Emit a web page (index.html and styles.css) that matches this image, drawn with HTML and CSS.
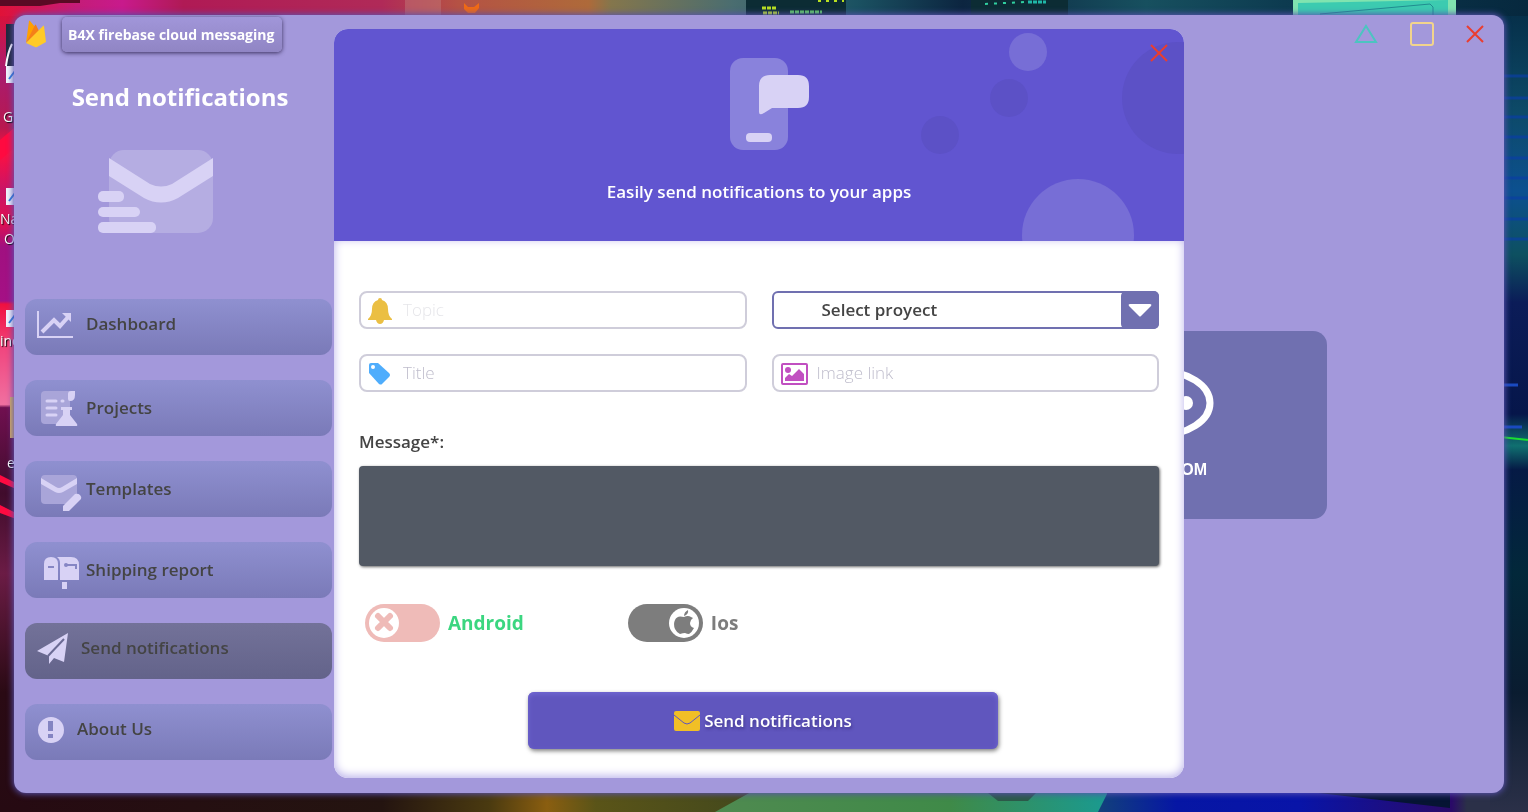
FILE: index.html
```html
<!DOCTYPE html>
<html lang="en">
<head>
    <meta charset="UTF-8">
    <meta name="viewport" content="width=device-width, initial-scale=1.0">
    <title>B4X firebase cloud messaging</title>
    <link rel="stylesheet" href="styles.css">
</head>
<body>
    <!-- Desktop wallpaper -->
    <svg class="wallpaper" viewBox="0 0 1528 812" preserveAspectRatio="none" aria-hidden="true">
        <defs>
            <linearGradient id="wallTop">
                <stop offset="0" stop-color="#e01238"/>
                <stop offset="0.05" stop-color="#c41c78"/>
                <stop offset="0.08" stop-color="#c81a8c"/>
                <stop offset="0.12" stop-color="#b01a55"/>
                <stop offset="0.25" stop-color="#b02a58"/>
                <stop offset="0.3" stop-color="#b55244"/>
                <stop offset="0.385" stop-color="#ae6a3a"/>
                <stop offset="0.4" stop-color="#84764c"/>
                <stop offset="0.48" stop-color="#4a6d70"/>
                <stop offset="0.56" stop-color="#1b5262"/>
                <stop offset="0.63" stop-color="#0c2540"/>
                <stop offset="0.75" stop-color="#17505f"/>
                <stop offset="0.84" stop-color="#0d3b50"/>
                <stop offset="1" stop-color="#06283e"/>
            </linearGradient>
            <linearGradient id="wallLeft" x2="0" y2="1">
                <stop offset="0" stop-color="#d8123c"/>
                <stop offset="0.07" stop-color="#a81c70"/>
                <stop offset="0.14" stop-color="#b8184f"/>
                <stop offset="0.17" stop-color="#ff1040"/>
                <stop offset="0.22" stop-color="#c81468"/>
                <stop offset="0.26" stop-color="#e01050"/>
                <stop offset="0.29" stop-color="#a01080"/>
                <stop offset="0.358" stop-color="#a51085"/>
                <stop offset="0.362" stop-color="#f01040"/>
                <stop offset="0.42" stop-color="#f04880"/>
                <stop offset="0.488" stop-color="#f070a0"/>
                <stop offset="0.492" stop-color="#701050"/>
                <stop offset="0.6" stop-color="#400c2c"/>
                <stop offset="0.7" stop-color="#6b1c45"/>
                <stop offset="0.85" stop-color="#2a0a14"/>
                <stop offset="1" stop-color="#260a12"/>
            </linearGradient>
            <linearGradient id="wallRight" x2="0" y2="1">
                <stop offset="0" stop-color="#06304a"/>
                <stop offset="0.12" stop-color="#0d4a68"/>
                <stop offset="0.22" stop-color="#0c5090"/>
                <stop offset="0.3" stop-color="#0d5060"/>
                <stop offset="0.36" stop-color="#0b1c58"/>
                <stop offset="0.5" stop-color="#06164a"/>
                <stop offset="0.54" stop-color="#107070"/>
                <stop offset="0.57" stop-color="#051a45"/>
                <stop offset="0.7" stop-color="#02283a"/>
                <stop offset="0.85" stop-color="#0a1c30"/>
                <stop offset="1" stop-color="#2b3048"/>
            </linearGradient>
            <linearGradient id="wallBottom">
                <stop offset="0" stop-color="#260a12"/>
                <stop offset="0.25" stop-color="#241410"/>
                <stop offset="0.32" stop-color="#4a3a10"/>
                <stop offset="0.358" stop-color="#8a5e10"/>
                <stop offset="0.39" stop-color="#5a5418"/>
                <stop offset="0.48" stop-color="#464a1c"/>
                <stop offset="0.72" stop-color="#12407c"/>
                <stop offset="0.77" stop-color="#0616a4"/>
                <stop offset="0.85" stop-color="#0814a8"/>
                <stop offset="0.95" stop-color="#2a0a68"/>
                <stop offset="0.96" stop-color="#2b3048"/>
                <stop offset="1" stop-color="#2b3048"/>
            </linearGradient>
            <linearGradient id="wallGreen">
                <stop offset="0" stop-color="#4f8a50"/>
                <stop offset="0.6" stop-color="#3f8a48"/>
                <stop offset="1" stop-color="#1a9a90"/>
            </linearGradient>
        </defs>
        <rect width="1528" height="30" fill="url(#wallTop)"/>
        <rect y="780" width="1528" height="32" fill="url(#wallBottom)"/>
        <path d="M715 812l36-20 30-12h324l2 14-9 18z" fill="url(#wallGreen)"/>
        <path d="M988 793h48l-8 8h-30z" fill="#2c5a48"/>
        <path d="M1310 792h140v16z" fill="#061433"/>
        <rect y="16" width="30" height="796" fill="url(#wallLeft)"/>
        <rect x="1490" y="16" width="38" height="796" fill="url(#wallRight)"/>
        <path d="M0 0h80v3H60l-20 3H0z" fill="#5a0a24"/>
        <rect x="405" width="36" height="16" fill="#c07878" opacity="0.5"/>
        <path d="M464 3l4 4h6l5-4v5l-4 5h-7l-4-4z" fill="#f06a14"/>
        <path d="M746 0h100v16H746zM971 0h97v16h-97z" fill="#0c2c34"/>
        <g stroke="#b8e020" stroke-width="3" stroke-dasharray="4 1">
            <path d="M762 8h14M763 13h16"/>
            <path d="M790 12h32" stroke="#5ecf60"/>
            <path d="M818 1h26" stroke-width="2" stroke-dasharray="3 5"/>
            <path d="M985 4l40-2" stroke="#30d0a0" stroke-width="2" stroke-dasharray="3 6"/>
            <path d="M1028 2h18" stroke="#20b8a8"/>
        </g>
        <path d="M1293 0h163v16h-163z" fill="#80e4b0"/>
        <path d="M1298 3l150-3v16h-150z" fill="#3ccbb0"/>
        <path d="M1320 14l110-10 3 3v9" fill="none" stroke="#218c90"/>
        <path d="M0 140l14-12v20l-14 12zM0 475l16 8v6l-16-7zM0 505l16 8v6l-16-6z" fill="#ff0a40"/>
        <g stroke="#0a3fa4" stroke-width="3" opacity="0.7">
            <path d="M1500 76h28M1500 98h28M1500 117h28M1500 137h28M1500 158h28M1500 178h28M1500 198h28M1500 219h28M1500 239h28"/>
        </g>
        <path d="M1500 385h18M1500 427h22" stroke="#1a4ac0" stroke-width="3"/>
        <path d="M1500 437l28 3" stroke="#1ae030" stroke-width="2"/>
        <path d="M10 397h6v41h-6z" fill="#d8b060"/>
        <path d="M6 24h10v42H6z" fill="#20283c"/>
        <path d="M6 66c1-8 3-16 6-22" fill="none" stroke="#fff" stroke-width="2"/>
        <path d="M6 66h10v17H6zM6 188h10v17H6zM6 310h10v17H6z" fill="#f0f4fc"/>
        <path d="M9 79l6-8M9 201l6-8M9 323l6-8" stroke="#2a80e0" stroke-width="2"/>
    </svg>
    <span class="desktop-label label-g">G</span>
    <span class="desktop-label label-na">Na</span>
    <span class="desktop-label label-o">O</span>
    <span class="desktop-label label-inc">inc</span>
    <span class="desktop-label label-e">e</span>

    <div class="window">
        <aside class="sidebar">
            <header class="brand">
                <svg class="brand-logo" width="22" height="30" viewBox="0 0 22 30" aria-hidden="true">
                    <path d="M1 24L4 2q.500-1 1 0l5 6-9 16z" fill="#ffa000"/>
                    <path d="M1 24l9-18q.500-1 1 0l3 6L1 24z" fill="#f57f17"/>
                    <path d="M1 24L18 7q1-1 1 0l2 16-9 5q-1 .500-2 0z" fill="#ffca28"/>
                </svg>
                <span class="brand-name">B4X firebase cloud messaging</span>
            </header>
            <h1>Send notifications</h1>
            <svg class="hero-icon" width="116" height="84" viewBox="0 0 116 84" aria-hidden="true">
                <rect x="11" width="104" height="83" rx="15" fill="#b5ade2"/>
                <path d="M11 8l41 26q11 5 22 0l41-26v18L80 48q-17 9-34 0L11 26z" fill="#d8d2f5"/>
                <rect y="41" width="26" height="11" rx="5" fill="#d8d2f5"/>
                <rect y="57" width="42" height="10" rx="5" fill="#d8d2f5"/>
                <rect y="72" width="58" height="11" rx="5" fill="#d8d2f5"/>
            </svg>
            <nav>
                <button type="button" class="nav-item raised">
                    <svg width="49" height="56" viewBox="0 0 49 56" aria-hidden="true">
                        <path d="M1 15v26h35" fill="none" stroke="#d8d2f5" stroke-width="2"/>
                        <path d="M5 36l12-12 6 6 9-10" fill="none" stroke="#d8d2f5" stroke-width="4"/>
                        <path d="M25 17h9v9z" fill="#d8d2f5"/>
                    </svg>
                    Dashboard
                </button>
                <button type="button" class="nav-item">
                    <svg width="49" height="56" viewBox="0 0 49 56" aria-hidden="true">
                        <path d="M8 11h25v33H8q-4 0-4-4V15q0-4 4-4z" fill="#a9a5d9"/>
                        <path d="M34 11h4v4q0 6-5 6-2 0-2-2v-5q0-3 3-3z" fill="#d8d2f5"/>
                        <path d="M10 21h9M10 28h9M10 35h9M25 21h1" stroke="#d8d2f5" stroke-width="3" stroke-linecap="round"/>
                        <path d="M24 27h11v3h-2v5l7 9q1 2-1 2H20q-2 0-1-2l7-9v-5h-2z" fill="#d8d2f5"/>
                    </svg>
                    Projects
                </button>
                <button type="button" class="nav-item">
                    <svg width="49" height="56" viewBox="0 0 49 56" aria-hidden="true">
                        <rect x="4" y="14" width="36" height="29" rx="4" fill="#a9a5d9"/>
                        <path d="M4 17l15 9q3 2 6 0l15-9v6l-14 8q-4 2-8 0L4 23z" fill="#d8d2f5"/>
                        <path d="M26 45l12-12q3-1 5 1t1 4L32 50h-6z" fill="#d8d2f5"/>
                    </svg>
                    Templates
                </button>
                <button type="button" class="nav-item">
                    <svg width="49" height="56" viewBox="0 0 49 56" aria-hidden="true">
                        <path d="M7 38V22q0-7 7-7t7 7v16z" fill="#d8d2f5"/>
                        <path d="M20 15h14q8 0 8 8v15H23V21q0-4-3-6z" fill="#d8d2f5"/>
                        <path d="M11 25h6M28 23h11v4" fill="none" stroke="#8686c4" stroke-width="2"/>
                        <circle cx="29" cy="23" r="2" fill="#8686c4"/>
                        <path d="M25 40h5v7h-5z" fill="#d8d2f5"/>
                    </svg>
                    Shipping report
                </button>
                <button type="button" class="nav-item raised active">
                    <svg width="44" height="56" viewBox="0 0 44 56" aria-hidden="true">
                        <path d="M0 31L31 13 27 42l-10-4-5 6v-8z" fill="#d8d2f5"/>
                        <path d="M27 19L11 36" stroke="#6b6a94" stroke-width="2"/>
                    </svg>
                    Send notifications
                </button>
                <button type="button" class="nav-item raised">
                    <svg width="40" height="56" viewBox="0 0 40 56" aria-hidden="true">
                        <circle cx="14" cy="29" r="13" fill="#d8d2f5"/>
                        <path d="M11 20h5v10h-5zM11 33h5v4h-5z" fill="#8484c2"/>
                    </svg>
                    About Us
                </button>
            </nav>
        </aside>

        <main class="dialog">
            <header class="dialog-header">
                <svg class="bubbles" width="270" height="212" viewBox="0 0 270 212" aria-hidden="true">
                    <circle cx="114" cy="23" r="19" fill="#776ed6"/>
                    <circle cx="95" cy="69" r="19" fill="#5c51c6"/>
                    <circle cx="26" cy="106" r="19" fill="#5c51c6"/>
                    <circle cx="264" cy="69" r="56" fill="#5c51c6"/>
                    <circle cx="164" cy="206" r="56" fill="#776ed6"/>
                </svg>
                <svg class="phone" width="80" height="92" viewBox="0 0 80 92" aria-hidden="true">
                    <rect width="58" height="92" rx="13" fill="#8982dc"/>
                    <path d="M40 17h28q11 0 11 11v11q0 11-11 11H42l-8 5q-5 3-5-1V28q0-11 11-11z" fill="#d8d2f5"/>
                    <rect x="16" y="75" width="26" height="9" rx="4" fill="#d8d2f5"/>
                </svg>
                <p>Easily send notifications to your apps</p>
                <button type="button" class="icon-btn dialog-close" aria-label="Close dialog">
                    <svg width="18" height="18" viewBox="0 0 18 18"><path d="M1 1l16 16M17 1L1 17" stroke="#ea3d2f" stroke-width="2"/></svg>
                </button>
            </header>

            <form class="dialog-body">
                <div class="fields">
                    <label class="field topic">
                        <svg width="24" height="26" viewBox="0 0 24 26" aria-hidden="true">
                            <path d="M12 0q2 0 2 2 6 2 6 9 0 7 4 10v1H0v-1q4-3 4-10 0-7 6-9 0-2 2-2z" fill="#ebbf43"/>
                            <path d="M8 22h8q-1 4-4 4t-4-4z" fill="#ebbf43"/>
                        </svg>
                        <input type="text" name="topic" placeholder="Topic" aria-label="Topic">
                    </label>
                    <div class="select">
                        <select name="project" aria-label="Project">
                            <option>Select proyect</option>
                        </select>
                        <svg width="38" height="38" viewBox="0 0 38 38" aria-hidden="true">
                            <path d="M9 13h20q2 0 1 2L20 25q-1 1-2 0L8 15q-1-2 1-2z" fill="#fff"/>
                        </svg>
                    </div>
                    <label class="field">
                        <svg width="24" height="22" viewBox="0 0 24 22" aria-hidden="true">
                            <path d="M1 2q0-2 2-2h7l11 10q2 2 0 4l-7 7q-1 1-3 0L1 10z" fill="#4fadfc"/>
                            <circle cx="5" cy="4" r="2" fill="#fff"/>
                        </svg>
                        <input type="text" name="title" placeholder="Title" aria-label="Title">
                    </label>
                    <label class="field image-link">
                        <svg width="27" height="22" viewBox="0 0 27 22" aria-hidden="true">
                            <rect x="1" y="1" width="25" height="20" rx="1" fill="none" stroke="#c14fc1" stroke-width="2"/>
                            <circle cx="7" cy="7" r="3" fill="#c14fc1"/>
                            <path d="M4 18v-3l4-4 3 2 7-7 5 5v7z" fill="#c14fc1"/>
                        </svg>
                        <input type="url" name="image" placeholder="Image link" aria-label="Image link">
                    </label>
                </div>

                <label class="message-label" for="message">Message*:</label>
                <textarea id="message" name="message"></textarea>

                <div class="platforms">
                    <label class="toggle android">
                        <span class="switch">
                            <input type="checkbox" name="android">
                            <svg class="knob" width="30" height="30" viewBox="0 0 30 30" aria-hidden="true">
                                <circle cx="15" cy="15" r="15" fill="#fff"/>
                                <path d="M9 8l12 12M21 8L9 20" stroke="#efbbb8" stroke-width="6" stroke-linecap="round"/>
                            </svg>
                        </span>
                        Android
                    </label>
                    <label class="toggle ios">
                        <span class="switch">
                            <input type="checkbox" name="ios" checked>
                            <svg class="knob" width="30" height="30" viewBox="0 0 30 30" aria-hidden="true">
                                <circle cx="15" cy="15" r="15" fill="#fff"/>
                                <path d="M15 9q4-2 7 0l2 1q-3 2-3 5 0 4 4 5-2 4-5 6-2 0-4-1-2 0-5 1-3-1-5-5-2-5 0-9 2-5 9-3z" fill="#7d7d7d"/>
                                <path d="M15 8q0-4 4-6 1 4-4 6z" fill="#7d7d7d"/>
                            </svg>
                        </span>
                        Ios
                    </label>
                </div>

                <button type="submit" class="send-btn">
                    <svg width="26" height="21" viewBox="0 0 26 21" aria-hidden="true">
                        <rect y="1" width="26" height="20" rx="2" fill="#f1bf26"/>
                        <path d="M0 5l10 8q3 2 6 0l10-8" fill="none" stroke="#6056be"/>
                    </svg>
                    Send notifications
                </button>
            </form>
        </main>

        <section class="backdrop">
            <div class="window-controls">
                <button type="button" class="icon-btn" aria-label="Minimize">
                    <svg width="26" height="24" viewBox="0 0 26 24"><path d="M14 4l10 16H4z" fill="none" stroke="#4cc4c0" stroke-width="2"/></svg>
                </button>
                <button type="button" class="icon-btn" aria-label="Maximize">
                    <svg width="24" height="24" viewBox="0 0 24 24"><rect x="1" y="1" width="22" height="22" rx="2" fill="none" stroke="#f2d48c" stroke-width="2"/></svg>
                </button>
                <button type="button" class="icon-btn" aria-label="Close">
                    <svg width="18" height="18" viewBox="0 0 18 18"><path d="M1 1l16 16M17 1L1 17" stroke="#ea3d2f" stroke-width="2"/></svg>
                </button>
            </div>
            <div class="card">
                <svg width="108" height="72" viewBox="0 0 108 72" aria-hidden="true">
                    <ellipse cx="54" cy="36" rx="50" ry="32" fill="none" stroke="#fff" stroke-width="7"/>
                    <circle cx="80" cy="36" r="7" fill="#fff"/>
                </svg>
                <span>OM</span>
            </div>
        </section>
    </div>
</body>
</html>
```

FILE: styles.css
```css
* {
    box-sizing: border-box;
}
body {
    margin: 0;
    padding: 15px 24px 19px 14px;
    min-height: 100vh;
    display: flex;
    background-color: #1b1020;
    font-family: 'Open Sans', 'Noto Sans', sans-serif;
    font-weight: 600;
    color: #444;
}
svg {
    display: block;
    flex: none;
}
button, input, select, textarea {
    font: inherit;
    color: inherit;
}
button {
    border: none;
    padding: 0;
    cursor: pointer;
}

/* Desktop behind the window */
.wallpaper {
    position: fixed;
    top: 0;
    left: 0;
    width: 100%;
    height: 100%;
}
.desktop-label {
    position: absolute;
    font-size: 14px;
    font-weight: 400;
    line-height: 20px;
    color: #fff;
    text-shadow: 1px 1px 1px #000;
}
.label-g {
    top: 107px;
    left: 3px;
}
.label-na {
    top: 209px;
    left: 0;
}
.label-o {
    top: 229px;
    left: 4px;
}
.label-inc {
    top: 331px;
    left: 0;
}
.label-e {
    top: 453px;
    left: 7px;
}

.window {
    position: relative;
    flex: 1;
    display: grid;
    grid-template-columns: 320px minmax(0, 1fr) 320px;
    background-color: #a398db;
    border-radius: 12px;
    box-shadow: 0 0 6px 1px #5a52b0;
}

/* Sidebar */
.sidebar {
    padding: 2px 2px 16px 11px;
}
.brand {
    display: flex;
    align-items: flex-start;
    gap: 15px;
}
.brand-logo {
    margin-top: 2px;
}
.brand-name {
    padding: 0 8px 0 6px;
    font-size: 14px;
    font-weight: 700;
    line-height: 35px;
    white-space: nowrap;
    color: #fff;
    border-radius: 5px;
    background-image: linear-gradient(#a196d9, #9085c4);
    box-shadow: 0 1px 4px rgba(30, 20, 60, 0.8);
}
h1 {
    margin: 29px 0 0 3px;
    font-size: 24px;
    font-weight: 700;
    line-height: 32px;
    text-align: center;
    color: #fff;
}
.hero-icon {
    margin: 37px 0 65px 73px;
}
nav {
    display: grid;
    gap: 25px;
}
.nav-item {
    display: flex;
    align-items: center;
    height: 56px;
    padding-left: 12px;
    font-size: 17px;
    line-height: 24px;
    text-align: left;
    border-radius: 12px;
    background-image: linear-gradient(#8f90d0, #7a7ab8);
}
.nav-item.raised {
    padding-bottom: 6px;
}
.nav-item.active {
    background-image: linear-gradient(#737299, #63638a);
}

/* Dialog */
.dialog {
    position: relative;
    z-index: 1;
    margin: 14px 0 15px;
    display: flex;
    flex-direction: column;
    border-radius: 14px;
    overflow: hidden;
    background-color: #fff;
}
.dialog-header {
    position: relative;
    height: 212px;
    padding-top: 29px;
    background-color: #6155d0;
    color: #fff;
}
.bubbles {
    position: absolute;
    top: 0;
    right: 0;
}
.phone {
    position: relative;
    margin: 0 auto;
    left: 11px;
}
.dialog-header p {
    position: relative;
    margin: 30px 0 0;
    font-size: 17px;
    line-height: 24px;
    text-align: center;
}
.icon-btn {
    background: none;
}
.dialog-close {
    position: absolute;
    top: 15px;
    right: 16px;
}
.dialog-body {
    flex: 1;
    padding: 50px 25px 29px;
    box-shadow: inset 0 -2px 10px #b8b0ea;
    border-radius: 0 0 14px 14px;
}
.fields {
    display: grid;
    grid-template-columns: 1fr 1fr;
    gap: 25px;
}
.field {
    display: flex;
    align-items: center;
    gap: 11px;
    height: 38px;
    padding: 2px 7px 0 7px;
    border: 2px solid #cfcdda;
    border-radius: 8px;
}
.field.image-link {
    gap: 9px;
}
.field input {
    flex: 1;
    min-width: 0;
    padding: 0 0 3px;
    border: none;
    outline: none;
    background: none;
    font-size: 17px;
    font-weight: 300;
}
.field input::placeholder {
    color: #bfbdcc;
}
.topic input::placeholder {
    color: #e6e6ea;
}
.select {
    position: relative;
}
.select select {
    width: 100%;
    height: 38px;
    padding: 0 38px 2px 48px;
    appearance: none;
    border: 2px solid #7070b0;
    border-radius: 6px;
    background-color: #fff;
    font-size: 17px;
}
.select svg {
    position: absolute;
    top: 0;
    right: 0;
    border-radius: 5px;
    background-color: #7070b0;
    pointer-events: none;
}
.message-label {
    display: block;
    margin: 38px 0 12px;
    font-size: 17px;
    line-height: 24px;
}
textarea {
    display: block;
    width: 100%;
    height: 100px;
    padding: 8px;
    resize: none;
    border: none;
    border-radius: 4px;
    background-color: #525964;
    color: #fff;
    box-shadow: 1px 1px 3px rgba(0, 0, 0, 0.6);
}
.platforms {
    display: flex;
    gap: 104px;
    margin: 38px 6px 50px;
    font-size: 19px;
    font-weight: 700;
    line-height: 38px;
}
.toggle {
    display: flex;
    gap: 8px;
}
.android {
    color: #3bd680;
}
.ios {
    color: #7d7d7d;
}
.switch {
    position: relative;
    height: 38px;
}
.switch input {
    display: block;
    width: 75px;
    height: 38px;
    margin: 0;
    appearance: none;
    border-radius: 19px;
    background-color: #efbbb8;
}
.switch input:checked {
    background-color: #7d7d7d;
}
.knob {
    position: absolute;
    top: 4px;
    left: 4px;
    pointer-events: none;
}
.switch input:checked + .knob {
    left: 41px;
}
.send-btn {
    display: flex;
    align-items: center;
    justify-content: center;
    gap: 4px;
    width: calc(100% - 330px);
    height: 57px;
    margin-left: 169px;
    border-radius: 6px;
    background-color: #6056be;
    color: #fff;
    font-size: 17px;
    box-shadow: 1px 2px 4px rgba(0, 0, 0, 0.5), inset 0 2px 5px #7268d4;
    text-shadow: 1px 2px 3px rgba(40, 30, 100, 0.5);
}

/* Page left visible beside the dialog */
.window-controls {
    display: flex;
    align-items: center;
    justify-content: flex-end;
    height: 38px;
    gap: 32px;
    padding-right: 20px;
}
/* The card continues underneath the dialog */
.card {
    display: flex;
    flex-direction: column;
    align-items: flex-end;
    gap: 22px;
    width: 333px;
    height: 188px;
    margin: 278px 0 0 -190px;
    padding: 36px 113px 0 0;
    border-radius: 14px;
    background-color: #7070b0;
    color: #fff;
    font-family: 'Liberation Sans', sans-serif;
    font-size: 16px;
    font-weight: 700;
    line-height: 18px;
}
.card span {
    padding-right: 7px;
}
```
